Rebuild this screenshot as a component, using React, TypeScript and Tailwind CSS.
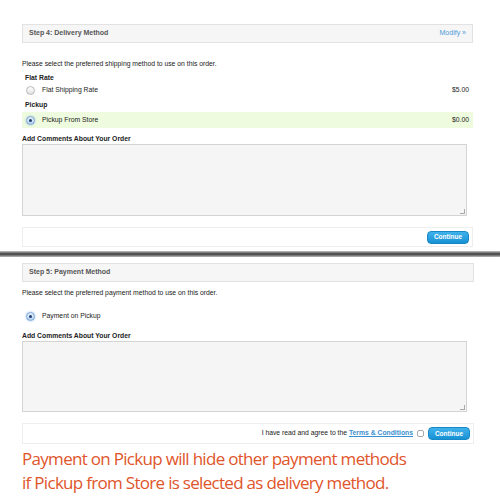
import React from "react";

function Radio({ checked }: { checked?: boolean }) {
  return (
    <span
      className={
        "inline-flex items-center justify-center w-[9px] h-[9px] rounded-full border " +
        (checked
          ? "border-[#7aa7d6] bg-gradient-to-b from-[#e6f0fb] to-[#b9d3ef] shadow-[0_0_2px_#8ab4e8]"
          : "border-[#b8b8b8] bg-gradient-to-b from-[#ffffff] to-[#e2e2e2]")
      }
    >
      {checked && <span className="w-[3px] h-[3px] rounded-full bg-[#1d3f73]" />}
    </span>
  );
}

function Header({ title, modify }: { title: string; modify?: boolean }) {
  return (
    <div className="h-[19px] border border-[#e2e2e2] bg-[#f6f6f6] flex items-center justify-between px-[6px]">
      <span className="font-bold text-[#555] text-[7px]">{title}</span>
      {modify && <span className="text-[#4b9ad6] text-[7px]">Modify »</span>}
    </div>
  );
}

function ContinueBtn() {
  return (
    <span className="inline-flex items-center justify-center w-[42px] h-[13px] rounded-[4px] bg-gradient-to-b from-[#3fb2ec] to-[#1591d4] text-white font-bold text-[6.5px] border border-[#1788c6]">
      Continue
    </span>
  );
}

export default function App() {
  return (
    <div
      className="w-[500px] h-[500px] bg-white overflow-hidden text-[#222] text-[6.8px]"
      style={{ fontFamily: '"Liberation Sans", Arial, sans-serif' }}
    >
      <div className="pl-[22px] pr-[27px] pt-[24px]">
        <Header title="Step 4: Delivery Method" modify />
        <div className="h-[16px]" />
        <div className="h-[10px] flex items-center">Please select the preferred shipping method to use on this order.</div>
        <div className="h-[4px]" />
        <div className="h-[10px] flex items-center font-bold pl-[3px]">Flat Rate</div>
        <div className="h-[15px] flex items-center justify-between pl-[4px] pr-[4px]">
          <span className="flex items-center gap-[7px]"><Radio /><span>Flat Shipping Rate</span></span>
          <span>$5.00</span>
        </div>
        <div className="h-[14px] flex items-center font-bold pl-[3px]">Pickup</div>
        <div className="h-[16px] flex items-center justify-between pl-[4px] pr-[4px] bg-[#effbde]">
          <span className="flex items-center gap-[7px]"><Radio checked /><span>Pickup From Store</span></span>
          <span>$0.00</span>
        </div>
        <div className="h-[6px]" />
        <div className="h-[10px] flex items-center font-bold">Add Comments About Your Order</div>
        <div className="mr-[6px] h-[72px] border border-[#d4d4d4] bg-[#f5f5f5] relative">
          <span className="absolute right-[1px] bottom-[1px] w-[5px] h-[5px] border-r border-b border-[#aaa]" />
        </div>
        <div className="h-[11px]" />
        <div className="h-[20px] border border-[#eeeeee] flex items-center justify-end pr-[3px]">
          <ContinueBtn />
        </div>
      </div>
      <div className="mt-[4px] h-[6px] bg-gradient-to-b from-[#c8c8c8] via-[#3e3e3e] to-[#bdbdbd]" />
      <div className="pl-[22px] pr-[26px] pt-[6px]">
        <Header title="Step 5: Payment Method" />
        <div className="h-[6px]" />
        <div className="h-[10px] flex items-center">Please select the preferred payment method to use on this order.</div>
        <div className="h-[13px]" />
        <div className="h-[10px] flex items-center pl-[4px]">
          <span className="flex items-center gap-[7px]"><Radio checked /><span>Payment on Pickup</span></span>
        </div>
        <div className="h-[10px]" />
        <div className="h-[10px] flex items-center font-bold">Add Comments About Your Order</div>
        <div className="mr-[7px] h-[71px] border border-[#d4d4d4] bg-[#f5f5f5] relative">
          <span className="absolute right-[1px] bottom-[1px] w-[5px] h-[5px] border-r border-b border-[#aaa]" />
        </div>
        <div className="h-[11px]" />
        <div className="h-[21px] border border-[#eeeeee] flex items-center justify-end pr-[3px] gap-[4px]">
          <span>
            I have read and agree to the{" "}
            <span className="text-[#3a8fd0] font-bold underline">Terms &amp; Conditions</span>
          </span>
          <span className="w-[7px] h-[7px] rounded-[2px] border border-[#aaa] bg-white" />
          <ContinueBtn />
        </div>
      </div>
      <div
        className="pl-[22px] pt-[3px] text-[#e0552b] text-[17px] leading-[24px]"
        style={{ fontFamily: '"Open Sans", sans-serif', letterSpacing: "-0.7px" }}
      >
        <div>Payment on Pickup will hide other payment methods</div>
        <div>if Pickup from Store is selected as delivery method.</div>
      </div>
    </div>
  );
}
